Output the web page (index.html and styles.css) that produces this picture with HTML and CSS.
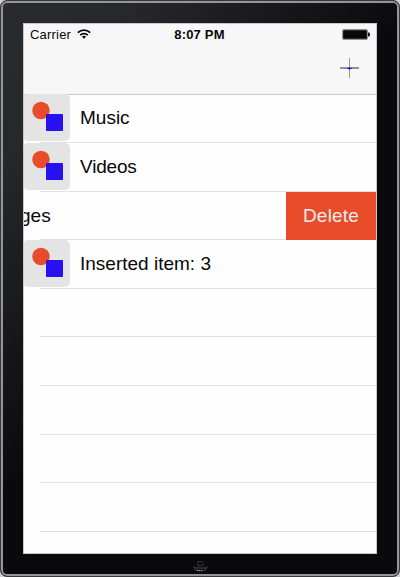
FILE: index.html
```html
<!DOCTYPE html>
<html lang="en">
<head>
<meta charset="utf-8">
<title>Items</title>
<link rel="stylesheet" href="styles.css">
</head>
<body>
<svg class="symbols" aria-hidden="true">
  <symbol id="shapes" viewBox="0 0 47 47">
    <rect width="47" height="47" rx="5" fill="#e4e4e5"/>
    <circle cx="18" cy="16.500" r="8.700" fill="#e84c2b"/>
    <rect x="23" y="20" width="17" height="17" rx="0.7" fill="#2810f0"/>
  </symbol>
</svg>
<div class="device">
  <main class="screen">
    <header class="top">
      <div class="status">
        <div class="carrier"><span>Carrier</span>
          <svg class="wifi" width="14" height="10" viewBox="0 0 14 10" fill="none" stroke="#08080a" stroke-width="1.8">
            <path d="M.8 3.7C4.3.2 9.7.2 13.2 3.7M3.2 6.2C5.3 4.1 8.7 4.1 10.8 6.2"/>
            <path d="M7 9.8 4.9 7.7Q7 6 9.1 7.7Z" fill="#08080a" stroke="none"/>
          </svg>
        </div>
        <time>8:07 PM</time>
        <svg class="battery" width="28" height="11" viewBox="0 0 28 11">
          <rect x=".6" y=".6" width="24.8" height="9.8" rx="1.5" fill="#08080a" stroke="#929294" stroke-width="1.2"/>
          <path d="M26 3.5h1q1 0 1 2t-1 2h-1z" fill="#08080a"/>
        </svg>
      </div>
      <div class="nav">
        <svg width="19" height="20" viewBox="0 0 19 20">
          <path d="M0 10h19" stroke="#929294" stroke-width="2"/>
          <path d="M9.5 0v20" stroke="#9c9a9c"/>
          <path d="M7 10.5h5M9.5 9v3" stroke="#2810f0"/>
        </svg>
      </div>
    </header>
    <ul class="list">
      <li class="row"><svg class="thumb"><use href="#shapes"/></svg><span class="label">Music</span></li>
      <li class="row"><svg class="thumb"><use href="#shapes"/></svg><span class="label tight">Videos</span></li>
      <li class="row swiped"><span class="label partial">ges</span><button class="delete">Delete</button></li>
      <li class="row"><svg class="thumb"><use href="#shapes"/></svg><span class="label">Inserted item: 3</span></li>
      <li class="row"></li>
      <li class="row"></li>
      <li class="row"></li>
      <li class="row"></li>
      <li class="row"></li>
      <li class="row"></li>
    </ul>
  </main>
  <svg class="home" width="15" height="12" viewBox="0 0 15 12" fill="none" stroke="#343538">
    <path d="M4 5.5h6.5M5 5V1.5h3.5L10 3v2.5"/>
    <path d="M.5 6.500 2 8h11l1.500-1.500M1.500 8.500 4 10.500h7l2.500-2" stroke-width="1.500"/>
    <path d="M4 10.500h1m1 0h1m1 0h1" stroke="#b0b0b0"/>
  </svg>
</div>
</body>
</html>
```
FILE: styles.css
```css
* { box-sizing: border-box; }
body {
  margin: 0;
  background: #cfcfcf;
  font-family: "Liberation Sans", Arial, sans-serif;
  color: #08080a;
}
.symbols { display: block; width: 0; height: 0; }
.device {
  width: 400px;
  height: 577px;
  padding: 22px 22px 0;
  border: 1px solid #38383b;
  border-radius: 7px;
  box-shadow: inset 0 0 0 2px #979597;
  background: linear-gradient(130deg, #2a2b2f 0%, #27282c 15%, #0a0a0c 48%);
  display: flex;
  flex-direction: column;
  align-items: center;
}
.screen {
  flex: none;
  width: 354px;
  height: 531px;
  border: 1px solid #cdc6c9;
  background: #fefefe;
  overflow: hidden;
}
.top {
  height: 71px;
  background: #f7f7f7;
  border-bottom: 1px solid #cdc8ca;
}
.status {
  display: grid;
  grid-template-columns: 1fr auto 1fr;
  align-items: center;
  height: 22px;
  padding: 0 6px;
  font-size: 13px;
  line-height: 22px;
}
.carrier { display: flex; align-items: center; gap: 6px; letter-spacing: .2px; }
.wifi { margin-top: -2px; }
.status time { margin-left: -1px; font-weight: bold; letter-spacing: .2px; }
.battery { justify-self: end; margin-top: -1px; }
.nav { display: flex; justify-content: flex-end; padding: 12px 17px 0 0; }
.list { margin: -.6px 0 0; padding: 0; list-style: none; }
.row {
  display: flex;
  align-items: flex-start;
  height: 48.6px;
  background: linear-gradient(#e1e1e2, #e1e1e2) right bottom / calc(100% - 16px) 1px no-repeat;
}
.thumb { flex: none; width: 47px; height: 47px; margin-left: -1px; }
.label {
  margin-left: 10px;
  font-size: 19px;
  line-height: 47px;
  white-space: nowrap;
}
.tight { letter-spacing: -.2px; }
.swiped { justify-content: space-between; }
.partial { margin-left: -4px; }
.delete {
  width: 90px;
  height: 48px;
  padding: 0;
  border: 0;
  background: #e84c2b;
  color: #ececec;
  font: 19px/48px "Liberation Sans", Arial, sans-serif;
  letter-spacing: .2px;
}
.home { flex: none; margin-top: 6px; }
```
